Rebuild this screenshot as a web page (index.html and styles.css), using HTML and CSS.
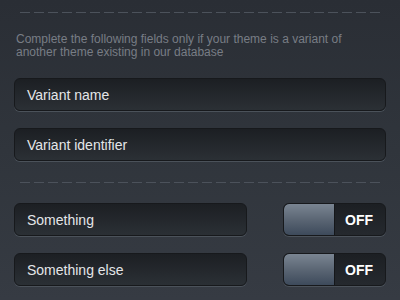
FILE: index.html
```html
<!DOCTYPE html>
<html>
<head>
<meta charset="utf-8">
<link rel="stylesheet" href="styles.css">
</head>
<body>
<div class="page">
  <div class="dash dash-top"></div>
  <p class="hint">Complete the following fields only if your theme is a variant of another theme existing in our database</p>
  <div class="field">Variant name</div>
  <div class="field">Variant identifier</div>
  <div class="dash dash-mid"></div>
  <div class="row">
    <div class="field field-short">Something</div>
    <div class="toggle"><span class="knob"></span><span class="state">OFF</span></div>
  </div>
  <div class="row">
    <div class="field field-short">Something else</div>
    <div class="toggle"><span class="knob"></span><span class="state">OFF</span></div>
  </div>
</div>
</body>
</html>
```
FILE: styles.css
```css
html, body {
  margin: 0;
  padding: 0;
  height: 100%;
}
body {
  background: linear-gradient(to bottom, #2a2e35 0%, #30353c 50%, #363b43 100%);
  font-family: "Liberation Sans", Arial, sans-serif;
  overflow: hidden;
}
.page {
  padding: 0 14px;
  display: flex;
  flex-direction: column;
}
.dash {
  height: 1px;
  margin: 0 6px;
  background: repeating-linear-gradient(to right, #4c525b 0 10px, transparent 10px 14px);
}
.dash-top {
  margin-top: 12px;
}
.hint {
  margin: 20px 0 0 2px;
  font-size: 12px;
  line-height: 13px;
  color: #787d85;
  width: 330px;
}
.field {
  box-sizing: border-box;
  height: 33px;
  border-radius: 6px;
  background: linear-gradient(to bottom, #1c1f23 0%, #25292e 60%, #2b3035 100%);
  border: 1px solid #17191c;
  box-shadow: 0 1px 0 #4b525a;
  color: #e4e6e9;
  font-size: 14px;
  display: flex;
  align-items: center;
  padding-left: 12px;
  margin-top: 17px;
}
.hint + .field {
  margin-top: 19px;
}
.dash-mid {
  margin-top: 21px;
}
.row {
  display: flex;
  justify-content: space-between;
  margin-top: 17px;
}
.dash-mid + .row {
  margin-top: 20px;
}
.row .field {
  margin-top: 0;
}
.field-short {
  width: 233px;
}
.toggle {
  box-sizing: border-box;
  width: 103px;
  height: 33px;
  border-radius: 6px;
  border: 1px solid #17191c;
  box-shadow: 0 1px 0 #4b525a;
  background: linear-gradient(to bottom, #1c1f23 0%, #25292e 100%);
  display: flex;
  overflow: hidden;
}
.knob {
  width: 50px;
  height: 100%;
  background: linear-gradient(to bottom, #7a8592 0%, #5b6674 50%, #3d4a5b 100%);
  border-right: 1px solid #15171a;
  border-radius: 5px 0 0 5px;
}
.state {
  flex: 1;
  display: flex;
  align-items: center;
  justify-content: center;
  padding-right: 2px;
  color: #ffffff;
  font-weight: bold;
  font-size: 14px;
}
```
